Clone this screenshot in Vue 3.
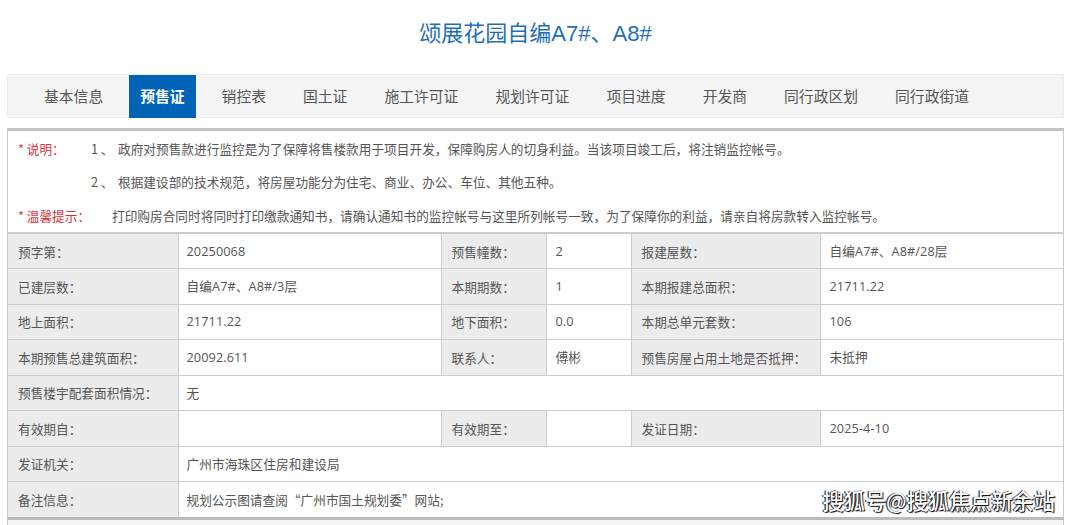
<script setup>
const tabs = ['基本信息', '预售证', '销控表', '国土证', '施工许可证', '规划许可证', '项目进度', '开发商', '同行政区划', '同行政街道']
const active = '预售证'
const notes = [
  { tag: '* 说明：', cls: 'w-short', num: '1 、', text: '政府对预售款进行监控是为了保障将售楼款用于项目开发，保障购房人的切身利益。当该项目竣工后，将注销监控帐号。' },
  { tag: '', cls: 'w-short', num: '2 、', text: '根据建设部的技术规范，将房屋功能分为住宅、商业、办公、车位、其他五种。' },
  { tag: '* 温馨提示：', cls: 'w-long', num: '', text: '打印购房合同时将同时打印缴款通知书，请确认通知书的监控帐号与这里所列帐号一致，为了保障你的利益，请亲自将房款转入监控帐号。' }
]
const rows = [
  [['预字第：', '20250068'], ['预售幢数：', '2'], ['报建屋数：', '自编A7#、A8#/28层']],
  [['已建层数：', '自编A7#、A8#/3层'], ['本期期数：', '1'], ['本期报建总面积：', '21711.22']],
  [['地上面积：', '21711.22'], ['地下面积：', '0.0'], ['本期总单元套数：', '106']],
  [['本期预售总建筑面积：', '20092.611'], ['联系人：', '傅彬'], ['预售房屋占用土地是否抵押：', '未抵押']],
  [['预售楼宇配套面积情况：', '无']],
  [['有效期自：', ''], ['有效期至：', ''], ['发证日期：', '2025-4-10']],
  [['发证机关：', '广州市海珠区住房和建设局']],
  [['备注信息：', '规划公示图请查阅“广州市国土规划委”网站;']]
]
</script>

<template>
  <div class="page">
    <h1 class="title">颂展花园自编A7#、A8#</h1>
    <nav class="tabs">
      <a v-for="t in tabs" :key="t" class="tab" :class="{ on: t === active }">{{ t }}</a>
    </nav>
    <section class="panel">
      <div class="notes">
        <div v-for="(n, i) in notes" :key="i" class="note">
          <span class="tag" :class="n.cls">{{ n.tag }}</span>
          <span v-if="n.num" class="num">{{ n.num }}</span>
          <span>{{ n.text }}</span>
        </div>
      </div>
      <table class="info">
        <colgroup>
          <col class="c1" /><col class="c2" /><col class="c3" /><col class="c4" /><col class="c5" /><col class="c6" />
        </colgroup>
        <tbody>
          <tr v-for="(r, i) in rows" :key="i">
            <template v-for="(c, j) in r" :key="j">
              <th>{{ c[0] }}</th>
              <td :colspan="r.length === 1 ? 5 : 1" :class="{ first: j === 0, cjk: c[1].includes('“') }">{{ c[1] }}</td>
            </template>
          </tr>
        </tbody>
      </table>
    </section>
    <div class="after"></div>
    <div class="mark">搜狐号@搜狐焦点新余站</div>
  </div>
</template>

<style scoped>
.page {
  position: relative;
  width: 1080px;
  height: 525px;
  overflow: hidden;
  background: #fff;
  color: #555;
  font-family: "Noto Sans CJK SC", "Open Sans", sans-serif;
  box-sizing: border-box;
  padding: 0 16px 0 7px;
}
.title {
  margin: 0;
  height: 74px;
  padding-top: 17px;
  box-sizing: border-box;
  line-height: 34px;
  text-align: center;
  font-size: 22px;
  font-weight: 400;
  color: #1f6fb5;
  font-family: "Liberation Sans", "Noto Sans CJK SC", sans-serif;
}
.tabs {
  display: flex;
  gap: 15px;
  height: 44px;
  box-sizing: border-box;
  padding-left: 25px;
  background: #f5f5f5;
  border: 1px solid #eee;
}
.tab {
  padding: 0 11px;
  height: 43px;
  line-height: 41px;
  font-size: 14.8px;
  color: #555;
}
.tab.on {
  background: #0063b8;
  color: #fff;
  font-weight: 700;
}
.panel {
  margin-top: 10px;
  border: 1px solid #ccc;
  border-top: 3px solid #c4c4c4;
  border-bottom: 3px solid #bbb;
}
.notes {
  height: 101px;
  padding: 1px 0 0 10px;
  box-sizing: border-box;
  font-size: 12.68px;
}
.note {
  display: flex;
  height: 33.4px;
  line-height: 33.4px;
}
.tag {
  color: #d8343c;
  flex: none;
}
.w-short { width: 73px; }
.w-long { width: 94px; }
.num {
  flex: none;
  width: 27px;
}
.info {
  width: 100%;
  table-layout: fixed;
  border-collapse: collapse;
  font-size: 12.68px;
}
.c1 { width: 170px; }
.c2 { width: 263px; }
.c3 { width: 105px; }
.c4 { width: 85px; }
.c5 { width: 189px; }
.info th,
.info td {
  height: 35.5px;
  box-sizing: border-box;
  padding: 0 0 0 9px;
  border: 1px solid #ccc;
  text-align: left;
  font-weight: 400;
  white-space: nowrap;
  overflow: hidden;
}
.info tr:first-child th,
.info tr:first-child td { border-top-width: 2px; }
.info tr > :first-child { border-left: 0; }
.info tr > :last-child { border-right: 0; }
.info tr:last-child th,
.info tr:last-child td { border-bottom: 0; }
.info th {
  background: #ececec;
  padding-left: 10px;
}
.info td {
  padding-bottom: 1px;
  letter-spacing: .1px;
  font-family: "Open Sans", "Noto Sans CJK SC", sans-serif;
}
.info td.first { padding-left: 8px; }
.info td.cjk {
  letter-spacing: 0;
  font-family: "Noto Sans CJK SC", sans-serif;
}
.after {
  height: 8px;
  background: #f5f5f5;
  border-left: 1px solid #ccc;
  border-right: 1px solid #ccc;
}
.mark {
  position: absolute;
  right: 25px;
  top: 486px;
  font-size: 21.2px;
  line-height: 28px;
  font-weight: 500;
  color: #fff;
  text-shadow: 1px 1px 1px #000, -1px 0 1px #000;
}
</style>
